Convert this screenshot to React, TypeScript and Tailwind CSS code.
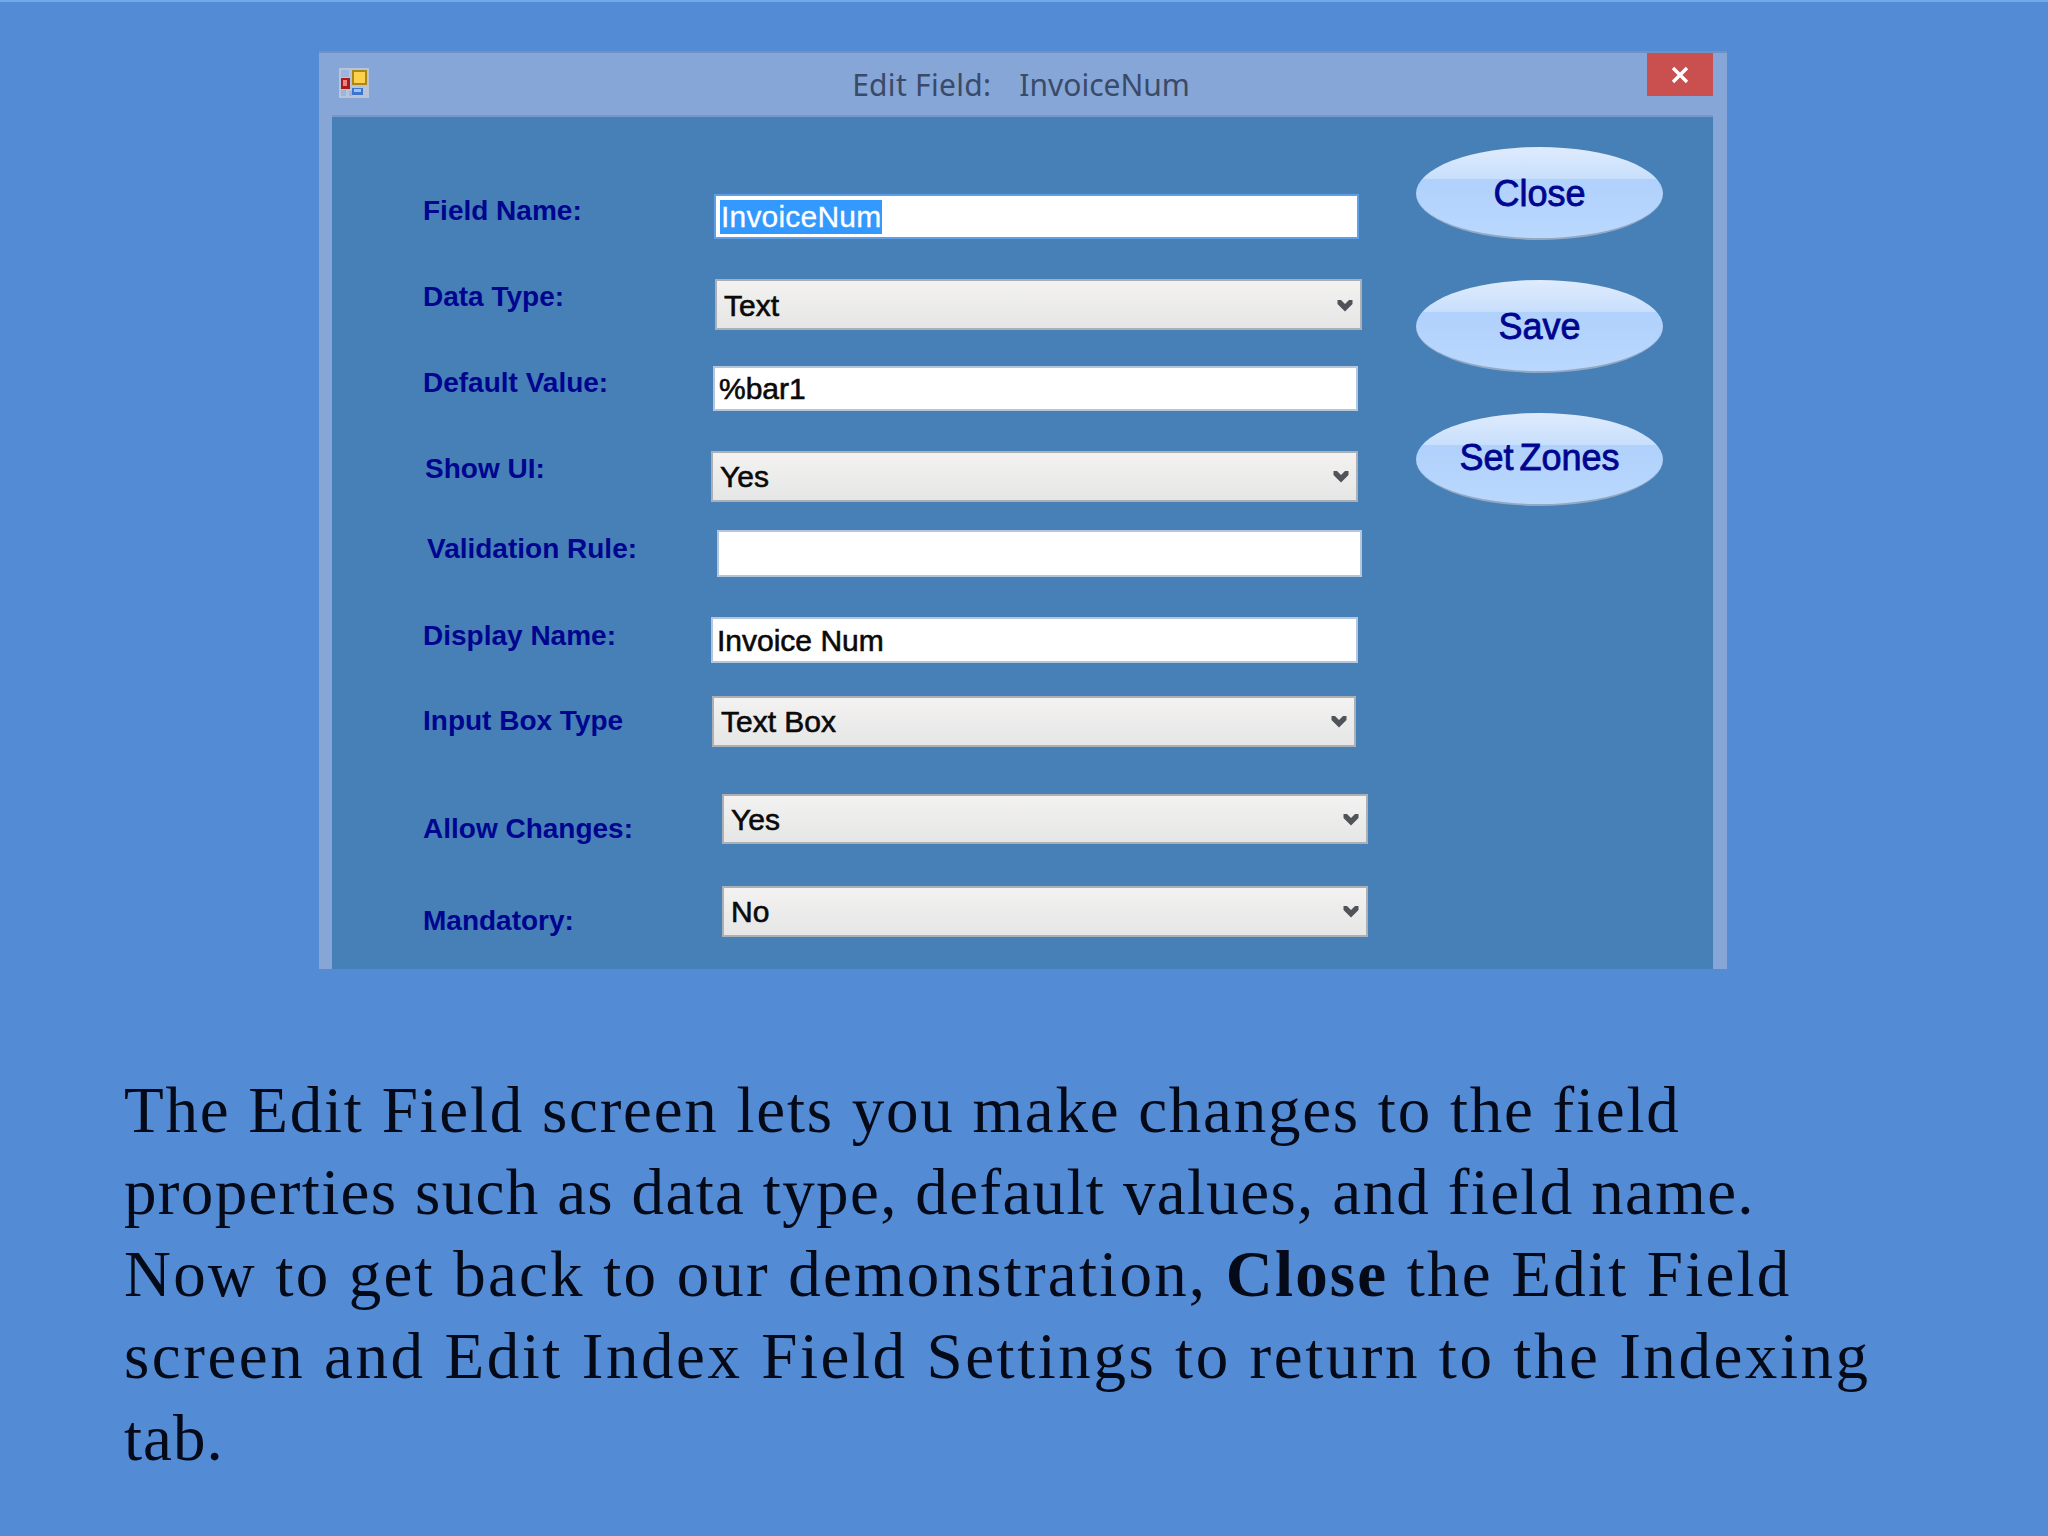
const chevron = (
  <svg width="16" height="13" viewBox="0 0 16 13" className="shrink-0">
    <path d="M0.5 1 L4 1 L8 5 L12 1 L15.5 1 L15.5 5 L8 12.5 L0.5 5 Z" fill="#505459" />
  </svg>
);

function Label({ text, className }: { text: string; className: string }) {
  return (
    <div className={"shrink-0 self-start text-[28px] leading-none font-bold whitespace-nowrap text-[#00058f] " + className}>
      {text}
    </div>
  );
}

function Box({ text, className }: { text?: string; className: string }) {
  return (
    <div className={"flex shrink-0 items-center border-2 border-[#b4c6dc] bg-white pl-[4px] text-[30px] text-[#0a0a0a] [-webkit-text-stroke:0.6px_#0a0a0a] " + className}>
      {text}
    </div>
  );
}

function Drop({ text, className }: { text: string; className: string }) {
  return (
    <div className={"flex shrink-0 items-center justify-between border-2 border-[#aab0b6] bg-gradient-to-b from-[#f3f2f1] to-[#e6e6e6] pr-[7px] pl-[7px] text-[30px] text-[#0a0a0a] [-webkit-text-stroke:0.6px_#0a0a0a] " + className}>
      <span>{text}</span>
      {chevron}
    </div>
  );
}

function Oval({ text, className }: { text: string; className?: string }) {
  return (
    <div className={"flex h-[93px] w-[247px] items-center justify-center rounded-[50%] border-b-2 border-[#93a8c2] bg-[linear-gradient(180deg,#dfebfd_0%,#c8dffc_35%,#b0d1fc_35%,#bad8fe_100%)] text-[36px] text-[#00058f] [-webkit-text-stroke:0.8px_#00058f] " + (className ?? "")}>
      {text}
    </div>
  );
}

export default function App() {
  return (
    <div className="h-[1536px] w-[2048px] overflow-hidden border-t-2 border-[#74a9ec] bg-[#548bd5] font-['Liberation_Sans',sans-serif]">
      <div className="mt-[49px] ml-[319px] flex h-[918px] w-[1408px] flex-col border-t-2 border-[#6f91c4] bg-[#86a6d7] pr-[14px] pl-[13px]">
        <div className="flex h-[64px] shrink-0 items-start border-b-2 border-[#7897c8]">
          <svg width="30" height="30" viewBox="0 0 30 30" className="mt-[15px] ml-[7px] shrink-0">
            <rect x="0" y="0" width="30" height="30" fill="#b9c4d6" />
            <rect x="2" y="2" width="8" height="7" fill="#9db4dd" />
            <rect x="2" y="22" width="5" height="6" fill="#9db4dd" />
            <rect x="10" y="23" width="3" height="5" fill="#9db4dd" />
            <rect x="2" y="10" width="9" height="11" fill="#a81c1c" />
            <rect x="4" y="12" width="4" height="6" fill="#f08080" />
            <rect x="13" y="2" width="15" height="15" fill="#a8871e" />
            <rect x="15" y="4" width="11" height="11" fill="#fdd24a" />
            <rect x="13" y="20" width="11" height="7" fill="#3c74d0" />
            <rect x="15" y="21" width="7" height="3" fill="#9cc4f4" />
          </svg>
          <div className="flex-1 pt-[12px] pl-[26px] text-center font-['Noto_Sans',sans-serif] text-[30px] leading-[40px] whitespace-pre text-[#3a4a69]">
            <span className="tracking-[0.3px]">Edit Field:</span>
            <span className="tracking-[1.5px]">   </span>
            <span>InvoiceNum</span>
          </div>
          <div className="flex h-[43px] w-[66px] shrink-0 items-center justify-center bg-[#c9504e]">
            <svg width="18" height="18" viewBox="0 0 18 18">
              <path d="M2 2 L16 16 M16 2 L2 16" stroke="#fff" strokeWidth="3.4" />
            </svg>
          </div>
        </div>
        <div className="flex flex-1 bg-[#4680b6]">
          <div className="w-[1084px] shrink-0 pl-[91px]">
            <div className="mt-[77px] flex h-[45px]">
              <Label text="Field Name:" className="mt-[3px] w-[291px]" />
              <div className="flex h-[45px] w-[645px] shrink-0 items-center border-2 border-[#5f9fe8] bg-white px-[4px] text-[30px] text-white">
                <span className="bg-[#3399ff] px-px leading-[34px] tracking-[0.2px] [-webkit-text-stroke:0.3px_#ffffff]">InvoiceNum</span>
              </div>
            </div>
            <div className="mt-[40px] flex h-[51px]">
              <Label text="Data Type:" className="mt-[4px] w-[292px]" />
              <Drop text="Text" className="h-[51px] w-[647px] pt-[2px]" />
            </div>
            <div className="mt-[36px] flex h-[45px]">
              <Label text="Default Value:" className="mt-[3px] w-[290px]" />
              <Box text="%bar1" className="h-[45px] w-[645px]" />
            </div>
            <div className="mt-[40px] flex h-[51px]">
              <Label text="Show UI:" className="mt-[4px] ml-[2px] w-[286px]" />
              <Drop text="Yes" className="h-[51px] w-[647px]" />
            </div>
            <div className="mt-[28px] flex h-[47px]">
              <Label text="Validation Rule:" className="mt-[5px] ml-[4px] w-[290px]" />
              <Box className="h-[47px] w-[645px]" />
            </div>
            <div className="mt-[40px] flex h-[46px]">
              <Label text="Display Name:" className="mt-[5px] w-[288px]" />
              <Box text="Invoice Num" className="h-[46px] w-[647px]" />
            </div>
            <div className="mt-[33px] flex h-[51px]">
              <Label text="Input Box Type" className="mt-[11px] w-[289px]" />
              <Drop text="Text Box" className="h-[51px] w-[644px]" />
            </div>
            <div className="mt-[47px] flex h-[50px]">
              <Label text="Allow Changes:" className="mt-[21px] w-[299px]" />
              <Drop text="Yes" className="h-[50px] w-[646px]" />
            </div>
            <div className="mt-[42px] flex h-[51px]">
              <Label text="Mandatory:" className="mt-[21px] w-[299px]" />
              <Drop text="No" className="h-[51px] w-[646px]" />
            </div>
          </div>
          <div className="flex flex-col gap-[40px] pt-[30px]">
            <Oval text="Close" className="pt-[2px]" />
            <Oval text="Save" className="pt-[2px]" />
            <Oval text="Set Zones" className="pb-[2px] [word-spacing:-4px]" />
          </div>
        </div>
      </div>
      <div className="mt-[100px] ml-[124px] font-['Liberation_Serif',serif] text-[65px] leading-[82px] whitespace-nowrap text-[#050a18]">
        <div className="tracking-[1.75px]">The Edit Field screen lets you make changes to the field</div>
        <div className="tracking-[1.35px]">properties such as data type, default values, and field name.</div>
        <div className="tracking-[2.2px]">
          Now to get back to our demonstration, <b>Close</b> the Edit Field
        </div>
        <div className="tracking-[2.55px]">screen and Edit Index Field Settings to return to the Indexing</div>
        <div className="tracking-[1px]">tab.</div>
      </div>
    </div>
  );
}
